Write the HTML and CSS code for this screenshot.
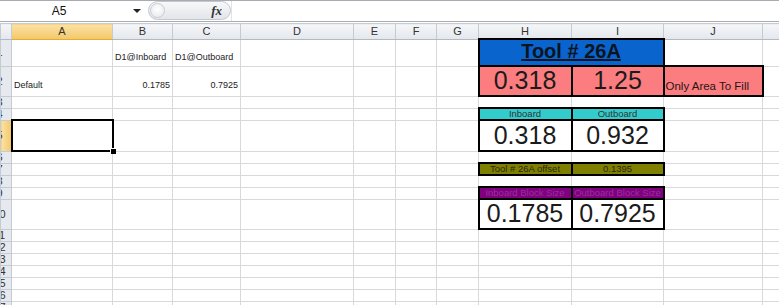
FILE: index.html
```html
<!DOCTYPE html>
<html>
<head>
    <title>Tool 26A - Block Size</title>
    <link rel="stylesheet" href="styles.css">
</head>
<body>
    <div class="formula-bar">
        <div class="name-box">
            <span class="name-text">A5</span>
            <span class="drop-arrow"></span>
        </div>
        <div class="fx-pill">
            <span class="knob"></span>
            <span class="fx">fx</span>
        </div>
        <div class="formula-input"></div>
    </div>

    <table class="sheet">
        <colgroup>
            <col style="width:11px">
            <col style="width:101px">
            <col style="width:60px">
            <col style="width:68px">
            <col style="width:113px">
            <col style="width:42px">
            <col style="width:41px">
            <col style="width:42px">
            <col style="width:93px">
            <col style="width:92px">
            <col style="width:99px">
            <col style="width:17px">
        </colgroup>
        <tr class="col-heads">
            <th class="corner"></th>
            <th class="active">A</th>
            <th>B</th>
            <th>C</th>
            <th>D</th>
            <th>E</th>
            <th>F</th>
            <th>G</th>
            <th>H</th>
            <th>I</th>
            <th>J</th>
            <th></th>
        </tr>
        <tr class="r1">
            <td class="rh"><div class="rn">1</div></td>
            <td></td>
            <td class="small">D1@Inboard</td>
            <td class="small">D1@Outboard</td>
            <td></td><td></td><td></td><td></td>
            <td colspan="2" class="title bx">Tool # 26A</td>
            <td></td><td></td>
        </tr>
        <tr class="r2">
            <td class="rh"><div class="rn">2</div></td>
            <td class="small">Default</td>
            <td class="small num">0.1785</td>
            <td class="small num">0.7925</td>
            <td></td><td></td><td></td><td></td>
            <td class="pink big bx">0.318</td>
            <td class="pink big bx">1.25</td>
            <td class="pink note bx">Only Area To Fill</td>
            <td></td>
        </tr>
        <tr class="r3">
            <td class="rh"><div class="rn">3</div></td>
            <td></td><td></td><td></td><td></td><td></td><td></td><td></td><td></td><td></td><td></td><td></td>
        </tr>
        <tr class="r4">
            <td class="rh"><div class="rn">4</div></td>
            <td></td><td></td><td></td><td></td><td></td><td></td><td></td>
            <td class="teal label bx">Inboard</td>
            <td class="teal label bx">Outboard</td>
            <td></td><td></td>
        </tr>
        <tr class="r5">
            <td class="rh active"><div class="rn">5</div></td>
            <td class="sel"></td>
            <td></td><td></td><td></td><td></td><td></td><td></td>
            <td class="big bx">0.318</td>
            <td class="big bx">0.932</td>
            <td></td><td></td>
        </tr>
        <tr class="r6">
            <td class="rh"><div class="rn">6</div></td>
            <td></td><td></td><td></td><td></td><td></td><td></td><td></td><td></td><td></td><td></td><td></td>
        </tr>
        <tr class="r7">
            <td class="rh"><div class="rn">7</div></td>
            <td></td><td></td><td></td><td></td><td></td><td></td><td></td>
            <td class="olive label bx">Tool # 26A offset</td>
            <td class="olive label bx">0.1395</td>
            <td></td><td></td>
        </tr>
        <tr class="r8">
            <td class="rh"><div class="rn">8</div></td>
            <td></td><td></td><td></td><td></td><td></td><td></td><td></td><td></td><td></td><td></td><td></td>
        </tr>
        <tr class="r9">
            <td class="rh"><div class="rn">9</div></td>
            <td></td><td></td><td></td><td></td><td></td><td></td><td></td>
            <td class="purple label bx">Inboard Block Size</td>
            <td class="purple label bx">Outboard Block Size</td>
            <td></td><td></td>
        </tr>
        <tr class="r10">
            <td class="rh"><div class="rn">10</div></td>
            <td></td><td></td><td></td><td></td><td></td><td></td><td></td>
            <td class="big bx">0.1785</td>
            <td class="big bx">0.7925</td>
            <td></td><td></td>
        </tr>
        <tr class="r11">
            <td class="rh"><div class="rn">11</div></td>
            <td></td><td></td><td></td><td></td><td></td><td></td><td></td><td></td><td></td><td></td><td></td>
        </tr>
        <tr class="rs">
            <td class="rh"><div class="rn">12</div></td>
            <td></td><td></td><td></td><td></td><td></td><td></td><td></td><td></td><td></td><td></td><td></td>
        </tr>
        <tr class="rs">
            <td class="rh"><div class="rn">13</div></td>
            <td></td><td></td><td></td><td></td><td></td><td></td><td></td><td></td><td></td><td></td><td></td>
        </tr>
        <tr class="rs">
            <td class="rh"><div class="rn">14</div></td>
            <td></td><td></td><td></td><td></td><td></td><td></td><td></td><td></td><td></td><td></td><td></td>
        </tr>
        <tr class="rs">
            <td class="rh"><div class="rn">15</div></td>
            <td></td><td></td><td></td><td></td><td></td><td></td><td></td><td></td><td></td><td></td><td></td>
        </tr>
        <tr class="rs">
            <td class="rh"><div class="rn">16</div></td>
            <td></td><td></td><td></td><td></td><td></td><td></td><td></td><td></td><td></td><td></td><td></td>
        </tr>
        <tr class="rs">
            <td class="rh"><div class="rn">17</div></td>
            <td></td><td></td><td></td><td></td><td></td><td></td><td></td><td></td><td></td><td></td><td></td>
        </tr>
    </table>
</body>
</html>
```

FILE: styles.css
```css
body {
    margin: 0;
    background: #ffffff;
    font-family: "Liberation Sans", Arial, sans-serif;
    color: #222;
    overflow: hidden;
}

/* formula bar */
.formula-bar {
    display: flex;
    height: 20px;
    border-top: 1px solid #a8acb2;
    border-bottom: 1px solid #a8acb2;
    background: #fff;
}

.name-box {
    display: flex;
    align-items: center;
    width: 148px;
}

.name-text {
    width: 118px;
    text-align: center;
    font-size: 12px;
    color: #111;
}

.drop-arrow {
    margin-left: 15px;
    width: 0;
    height: 0;
    border-left: 4px solid transparent;
    border-right: 4px solid transparent;
    border-top: 4px solid #222;
}

.fx-pill {
    display: flex;
    align-items: center;
    justify-content: space-between;
    width: 83px;
    height: 19px;
    box-sizing: border-box;
    border: 1px solid #c4c8ce;
    border-radius: 10px;
    background: linear-gradient(#f7f8f9, #e2e5e9);
}

.knob {
    width: 15px;
    height: 15px;
    margin-left: 1px;
    box-sizing: border-box;
    border: 1px solid #c9cdd2;
    border-radius: 50%;
    background: radial-gradient(circle at 50% 40%, #ffffff, #e4e6e9);
}

.fx {
    margin-right: 8px;
    font-family: "Liberation Serif", serif;
    font-style: italic;
    font-weight: bold;
    font-size: 13px;
    color: #333;
}

.formula-input {
    flex: 1;
    border-left: 1px solid #e0e2e5;
}

/* grid */
.sheet {
    width: 779px;
    table-layout: fixed;
    border-collapse: collapse;
    margin-top: 1px;
}

.sheet td {
    padding: 0 2px 1px;
    border: 1px solid #d9d9d9;
    vertical-align: bottom;
    white-space: nowrap;
    overflow: hidden;
    font-size: 9px;
    line-height: 1;
}

.col-heads th {
    height: 14px;
    padding: 0;
    font-weight: normal;
    font-size: 11px;
    color: #333;
    background: linear-gradient(#f5f6f8, #e3e7ec);
    border: 1px solid #c6cbd2;
    border-bottom-color: #b3b9c2;
}

.col-heads th.active {
    background: linear-gradient(#fbe2a6, #f2c867);
    border-bottom-color: #e8a93a;
}

.sheet td.rh {
    padding: 0;
    background: #e6e9ee;
    border-color: #c6cbd2;
    font-size: 11px;
    color: #333;
    vertical-align: middle;
}

.sheet td.rh.active {
    background: linear-gradient(90deg, #fbe2a6, #f2c867);
}

.rn {
    width: 25px;
    margin-left: -14px;
    text-align: center;
}

.r1 { height: 27px; }
.r2 { height: 30px; }
.r3 { height: 11px; }
.r4 { height: 12px; }
.r5 { height: 31px; }
.r6, .r7, .r8, .r9 { height: 12px; }
.r10 { height: 30px; }
.r11, .rs { height: 11px; }

.sheet td.num {
    text-align: right;
}

.sheet td.small {
    padding-bottom: 4px;
}

.r2 td.small {
    padding-bottom: 6px;
}

/* blocks */
.sheet td.bx {
    border: 2px solid #000;
    text-align: center;
}

.sheet td.title {
    background: #0a64cd;
    font-size: 20px;
    font-weight: bold;
    text-decoration: underline;
    color: #0b1420;
    padding-bottom: 4px;
}

.sheet td.pink {
    background: #fb7d7f;
}

.sheet td.big {
    font-size: 25px;
    color: #1b1b1b;
    padding-bottom: 2px;
}

.sheet td.note {
    font-size: 11.5px;
    text-align: left;
    padding: 0 0 3px 1px;
    color: #2a1414;
}

.sheet td.label {
    font-size: 9.5px;
    padding: 0;
    vertical-align: middle;
}

.teal {
    background: #33cccc;
    color: #333;
}

.olive {
    background: #808000;
    color: #26260a;
}

.purple {
    background: #800080;
    color: #96309a;
}

.sheet td.sel {
    position: relative;
    overflow: visible;
    border: 2px solid #000;
}

.sheet td.sel::after {
    content: "";
    position: absolute;
    right: -4px;
    bottom: -4px;
    width: 5px;
    height: 5px;
    background: #000;
    border: 1px solid #fff;
    border-right: 0;
    border-bottom: 0;
}
```
